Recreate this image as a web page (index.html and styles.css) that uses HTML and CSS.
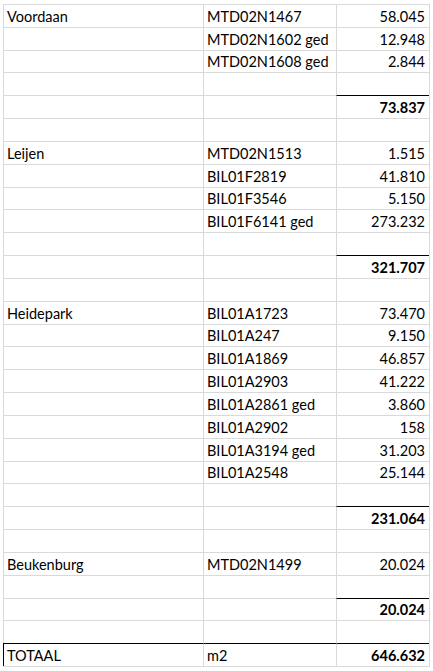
FILE: index.html
```html
<!DOCTYPE html>
<html lang="nl">
<head>
<meta charset="utf-8">
<title>Oppervlakten</title>
<link rel="stylesheet" href="styles.css">
</head>
<body>
<div class="sheet">
  <div class="c">Voordaan</div><div class="c">MTD02N1467</div><div class="c n">58.045</div>
  <div class="c"></div><div class="c">MTD02N1602 ged</div><div class="c n">12.948</div>
  <div class="c"></div><div class="c">MTD02N1608 ged</div><div class="c n">2.844</div>
  <div class="c"></div><div class="c"></div><div class="c n"></div>
  <div class="c"></div><div class="c"></div><div class="c n sum">73.837</div>
  <div class="c"></div><div class="c"></div><div class="c n"></div>

  <div class="c">Leijen</div><div class="c">MTD02N1513</div><div class="c n">1.515</div>
  <div class="c"></div><div class="c">BIL01F2819</div><div class="c n">41.810</div>
  <div class="c"></div><div class="c">BIL01F3546</div><div class="c n">5.150</div>
  <div class="c"></div><div class="c">BIL01F6141 ged</div><div class="c n">273.232</div>
  <div class="c"></div><div class="c"></div><div class="c n"></div>
  <div class="c"></div><div class="c"></div><div class="c n sum">321.707</div>
  <div class="c"></div><div class="c"></div><div class="c n"></div>

  <div class="c">Heidepark</div><div class="c">BIL01A1723</div><div class="c n">73.470</div>
  <div class="c"></div><div class="c">BIL01A247</div><div class="c n">9.150</div>
  <div class="c"></div><div class="c">BIL01A1869</div><div class="c n">46.857</div>
  <div class="c"></div><div class="c">BIL01A2903</div><div class="c n">41.222</div>
  <div class="c"></div><div class="c">BIL01A2861 ged</div><div class="c n">3.860</div>
  <div class="c"></div><div class="c">BIL01A2902</div><div class="c n">158</div>
  <div class="c"></div><div class="c">BIL01A3194 ged</div><div class="c n">31.203</div>
  <div class="c"></div><div class="c">BIL01A2548</div><div class="c n">25.144</div>
  <div class="c"></div><div class="c"></div><div class="c n"></div>
  <div class="c"></div><div class="c"></div><div class="c n sum">231.064</div>
  <div class="c"></div><div class="c"></div><div class="c n"></div>

  <div class="c">Beukenburg</div><div class="c">MTD02N1499</div><div class="c n">20.024</div>
  <div class="c"></div><div class="c"></div><div class="c n"></div>
  <div class="c"></div><div class="c"></div><div class="c n sum">20.024</div>
  <div class="c"></div><div class="c"></div><div class="c n"></div>

  <div class="c tot first">TOTAAL</div><div class="c tot">m2</div><div class="c n tot sum">646.632</div>
</div>
</body>
</html>
```

FILE: styles.css
```css
html, body {
  margin: 0;
  padding: 0;
  background: #ffffff;
}

body {
  padding: 4px 0 0 3px;
  font-family: Lato, "Open Sans", sans-serif;
  font-size: 14.5px;
  color: #000000;
}

.sheet {
  display: grid;
  grid-template-columns: 200px 133px 93px;
  grid-auto-rows: 22.83px;
  width: 427px;
  box-sizing: border-box;
  border-right: 1px solid #d9d9d9;
  border-bottom: 1px solid #d9d9d9;
}

.c {
  box-sizing: border-box;
  border-top: 1px solid #d9d9d9;
  border-left: 1px solid #d9d9d9;
  padding: 0 4px 2px 3px;
  line-height: 17px;
  display: flex;
  align-items: flex-end;
  white-space: nowrap;
  overflow: hidden;
}

.n {
  justify-content: flex-end;
}

.sum {
  font-weight: bold;
  border-top-color: #000000;
}

.tot {
  border-top-color: #000000;
}

.tot.first {
  border-left-color: #000000;
}
```
